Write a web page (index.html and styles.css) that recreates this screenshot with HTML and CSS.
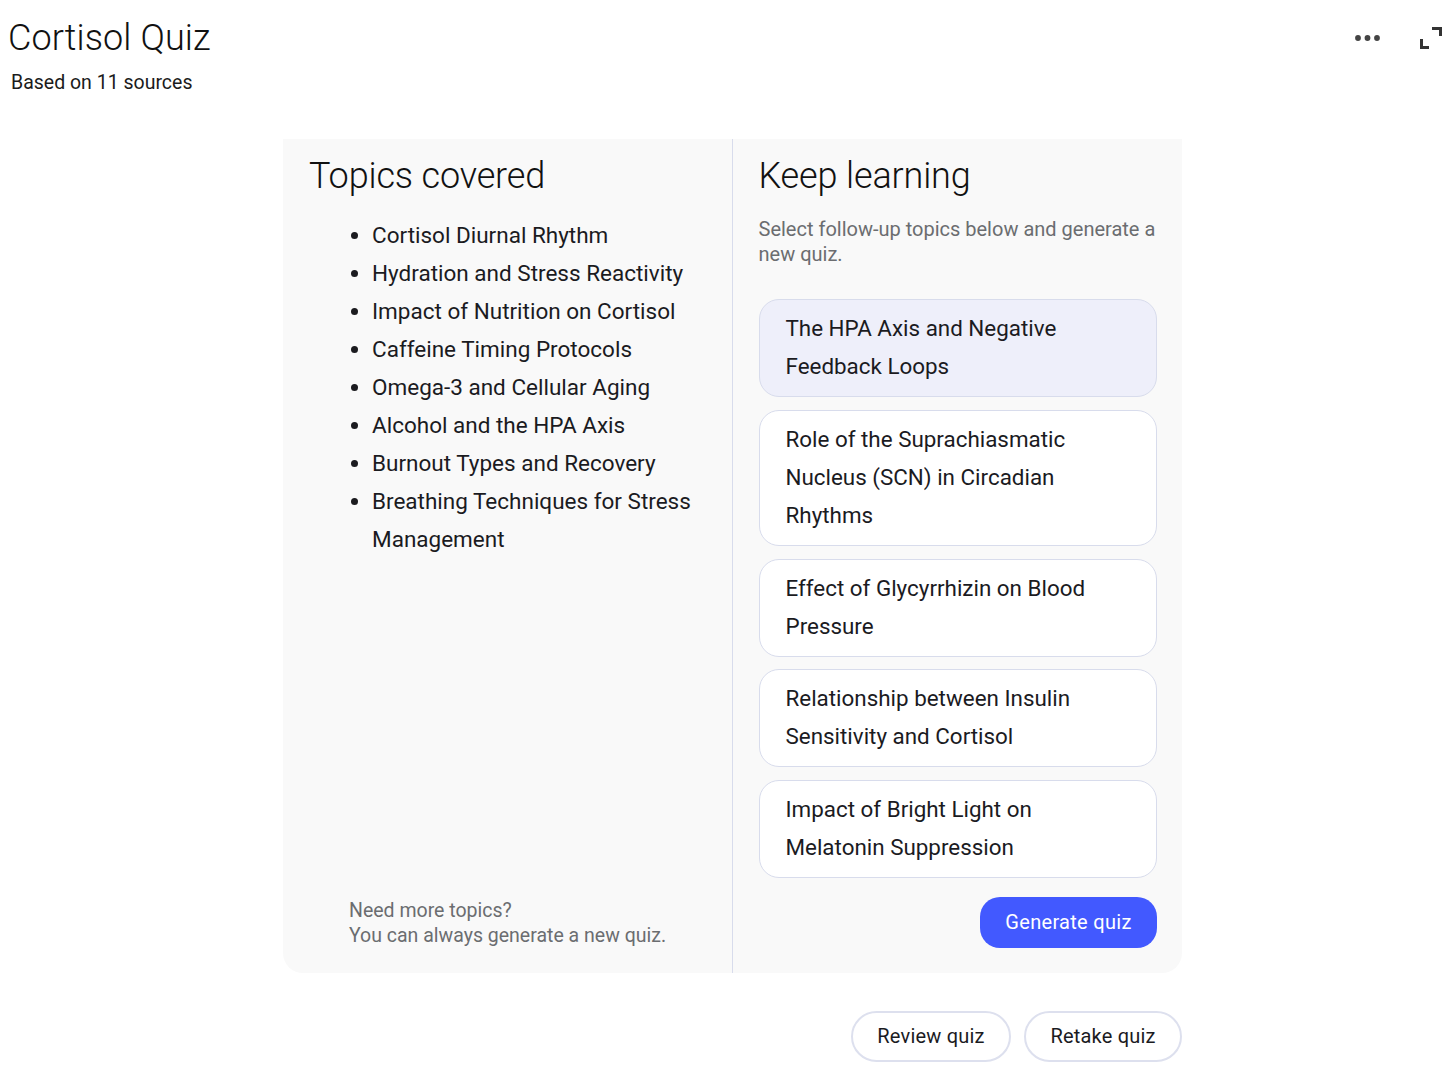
FILE: index.html
```html
<!DOCTYPE html>
<html lang="en">
<head>
  <meta charset="UTF-8">
  <meta name="viewport" content="width=device-width, initial-scale=1.0">
  <title>Cortisol Quiz</title>
  <link rel="stylesheet" href="styles.css">
</head>
<body>
  <!-- top bar -->
  <div class="header">
    <div class="header-text">
      <h1>Cortisol Quiz</h1>
      <p class="sources">Based on 11 sources</p>
    </div>
    <div class="header-icons">
      <svg class="icon-more" width="25" height="6" viewBox="0 0 25 6"><circle cx="3" cy="3" r="2.9"/><circle cx="12.5" cy="3" r="2.9"/><circle cx="22" cy="3" r="2.9"/></svg>
      <svg class="icon-expand" width="22" height="22" viewBox="0 0 22 22"><path d="M12 0h10v9h-3V3h-7zM0 12h3v7h6v3H0z"/></svg>
    </div>
  </div>

  <div class="panel">
    <div class="col col-left">
      <h2>Topics covered</h2>
      <ul class="topics">
        <li>Cortisol Diurnal Rhythm</li>
        <li>Hydration and Stress Reactivity</li>
        <li>Impact of Nutrition on Cortisol</li>
        <li>Caffeine Timing Protocols</li>
        <li>Omega-3 and Cellular Aging</li>
        <li>Alcohol and the HPA Axis</li>
        <li>Burnout Types and Recovery</li>
        <li>Breathing Techniques for Stress Management</li>
      </ul>
      <p class="more">Need more topics?<br>You can always generate a new quiz.</p>
    </div>
    <div class="col col-right">
      <h2>Keep learning</h2>
      <p class="hint">Select follow-up topics below and generate a new quiz.</p>
      <div class="cards">
        <div class="card selected">The HPA Axis and Negative Feedback Loops</div>
        <div class="card">Role of the Suprachiasmatic Nucleus (SCN) in Circadian Rhythms</div>
        <div class="card">Effect of Glycyrrhizin on Blood Pressure</div>
        <div class="card">Relationship between Insulin Sensitivity and Cortisol</div>
        <div class="card">Impact of Bright Light on Melatonin Suppression</div>
      </div>
      <div class="generate-row">
        <button class="btn-generate">Generate quiz</button>
      </div>
    </div>
  </div>

  <div class="actions">
    <button class="btn-outline">Review quiz</button>
    <button class="btn-outline">Retake quiz</button>
  </div>
</body>
</html>
```

FILE: styles.css
```css
body {
    font-family: Roboto, "Liberation Sans", sans-serif;
    margin: 0;
    background-color: #fff;
    color: #1b1b1f;
}

/* top bar */
.header {
    display: flex;
    justify-content: space-between;
    height: 139px;
}

.header-text {
    padding: 15px 0 0 8px;
}

.header h1 {
    font-size: 36px;
    font-weight: 350;
    letter-spacing: 0.1px;
    line-height: 46px;
    margin: 0;
    color: #111;
}

.sources {
    font-size: 19.5px;
    line-height: 26px;
    margin: 9px 0 0 3px;
    color: #1b1b1b;
}

.header-icons {
    display: flex;
    align-items: flex-start;
    gap: 40px;
    padding: 27px 14px 0 0;
}

.icon-more {
    fill: #444;
    margin-top: 8px;
}

.icon-expand {
    fill: #333;
}

/* main panel */
.panel {
    display: flex;
    width: 899px;
    height: 834px;
    margin-left: 283px;
    background-color: #f9f9f9;
    border-radius: 0 0 20px 20px;
}

.col {
    display: flex;
    flex-direction: column;
    box-sizing: border-box;
    width: 50%;
}

.col-left {
    padding: 14px 26px 0 26px;
    border-right: 1px solid #d8dcec;
}

.col-right {
    padding: 14px 25px 0 26px;
}

.col h2 {
    font-size: 36px;
    font-weight: 350;
    letter-spacing: -0.15px;
    line-height: 46px;
    margin: 0;
    color: #111;
}

.topics {
    flex: 1;
    margin: 17px 0 0;
    padding: 0 0 0 63px;
    font-size: 22.5px;
    line-height: 38px;
}

.more {
    font-size: 19.5px;
    line-height: 25px;
    margin: 0 0 25px 40px;
    color: #6b6d70;
}

.hint {
    font-size: 20px;
    line-height: 25px;
    margin: 18px 0 0;
    color: #6b6d70;
}

.cards {
    display: flex;
    flex-direction: column;
    gap: 12.75px;
    margin-top: 32px;
}

.card {
    background-color: #fff;
    border: 1px solid #d8dcec;
    border-radius: 20px;
    padding: 9px 26px 11px;
    font-size: 22.4px;
    line-height: 38px;
}

.card.selected {
    background-color: #eeeffa;
}

.generate-row {
    display: flex;
    justify-content: flex-end;
    margin-top: 19px;
}

.btn-generate {
    width: 177px;
    height: 51px;
    padding: 0 0 2px;
    background-color: #4259ff;
    color: #fff;
    border: none;
    border-radius: 20px;
    font-family: inherit;
    font-size: 20px;
    letter-spacing: 0.3px;
}

.actions {
    display: flex;
    justify-content: flex-end;
    gap: 13px;
    width: 899px;
    margin: 38px 0 0 283px;
}

.btn-outline {
    width: 160px;
    height: 51px;
    padding: 0 0 2px;
    background-color: #fff;
    color: #1b1b1f;
    border: 2px solid #dde0ee;
    border-radius: 26px;
    font-family: inherit;
    font-size: 20px;
    letter-spacing: 0.2px;
}

.btn-outline:last-child {
    width: 158px;
}
```
